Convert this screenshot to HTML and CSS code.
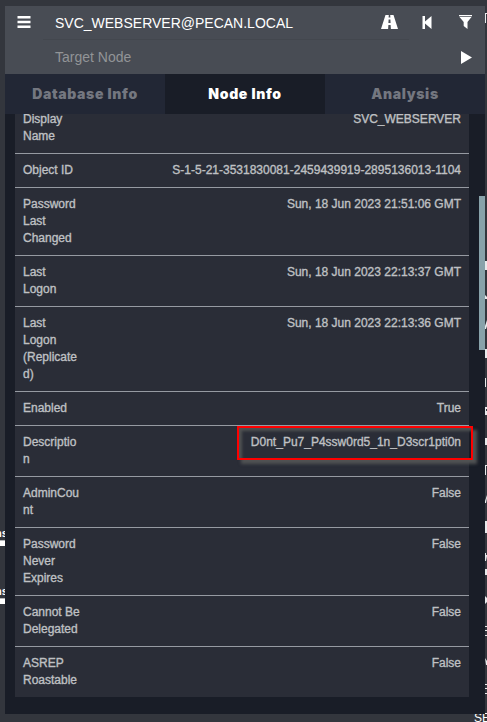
FILE: index.html
```html
<!DOCTYPE html>
<html lang="en">
<head>
<meta charset="utf-8">
<title>Node Info</title>
<link rel="stylesheet" href="styles.css">
</head>
<body>
<div class="graph">
  <span class="node-label l1">ns</span><i class="edge e1"></i>
  <span class="node-label l2">ns</span><i class="edge e2"></i>
  <svg class="labels-right" width="12" height="722" viewBox="0 0 12 722" fill="#e8e9eb">
    <path d="M10 13h2v1h-1v9h-1zM10 261h2v9h-2zM10 295l2 2v2h-2zM10 326l2-6v6l-1 3h-1zM10 349h2v9h-2zM10 378h1v9h-1zM10 407h2v2h-1v2h1v4h-2zM10 438h2v7h-2zM10 465h2v1h-1v9h-1zM10 501l2-6v3l-1 5h-1zM10 521h2v12h-2zM10 553h1v2h1v1l-1 5h-1zM10 569h2v6h-2zM10 596l2 2v4l-2 2zM10 626h2v1h-2zM10 630h2v1h-2zM10 635h2v1h-2zM10 658l2 3v4h-1zM10 684h2v1h-2zM10 688h2v1h-2zM10 693h2v1h-2z"/>
  </svg>
  <span class="node-label l3">SE</span>
</div>
<main class="panel">
  <header class="search">
    <div class="search-row">
      <svg class="menu" width="14" height="12" viewBox="0 0 14 12"><path fill="#fff" d="M.5 0h13v2.500H.5zM.5 4.800h13v2.400H.5zM.5 9.500h13V12H.5z"/></svg>
      <span class="query">SVC_WEBSERVER@PECAN.LOCAL</span>
      <svg class="tools" width="92" height="16" viewBox="0 0 92 16" fill="#fff">
        <path fill-rule="evenodd" d="M4.500 1h3.300L7.600 3.500h1.800L9.200 1h3.300l4.500 14H9.900L9.600 11H7.400l-.3 4H0zM7.600 5.500L7.400 9h2.200l-.2-3.500z"/>
        <path d="M41.500 2h2.500v5.400L50.500 2v13L44 9.600V15h-2.500z"/>
        <path d="M78 1h13v1.300H78zM78.500 3h12L86.500 8v7L82.700 12V8z"/>
      </svg>
    </div>
    <div class="search-row target">
      <span class="query">Target Node</span>
      <svg class="play" width="11" height="13" viewBox="0 0 11 13"><path fill="#fff" d="M0 0l11 6.500L0 13z"/></svg>
    </div>
  </header>
  <nav class="tabs">
    <span class="tab">Database Info</span>
    <span class="tab active">Node Info</span>
    <span class="tab">Analysis</span>
  </nav>
  <section class="content">
    <dl class="props">
      <div class="row"><dt>Display<br>Name</dt><dd>SVC_WEBSERVER</dd></div>
      <div class="row"><dt>Object ID</dt><dd>S-1-5-21-3531830081-2459439919-2895136013-1104</dd></div>
      <div class="row"><dt>Password<br>Last<br>Changed</dt><dd>Sun, 18 Jun 2023 21:51:06 GMT</dd></div>
      <div class="row"><dt>Last<br>Logon</dt><dd>Sun, 18 Jun 2023 22:13:37 GMT</dd></div>
      <div class="row"><dt>Last<br>Logon<br>(Replicate<br>d)</dt><dd>Sun, 18 Jun 2023 22:13:36 GMT</dd></div>
      <div class="row"><dt>Enabled</dt><dd>True</dd></div>
      <div class="row"><dt>Descriptio<br>n</dt><dd>D0nt_Pu7_P4ssw0rd5_1n_D3scr1pti0n</dd></div>
      <div class="row"><dt>AdminCou<br>nt</dt><dd>False</dd></div>
      <div class="row"><dt>Password<br>Never<br>Expires</dt><dd>False</dd></div>
      <div class="row"><dt>Cannot Be<br>Delegated</dt><dd>False</dd></div>
      <div class="row"><dt>ASREP<br>Roastable</dt><dd>False</dd></div>
    </dl>
    <i class="scrollbar"></i>
  </section>
</main>
<div class="highlight"></div>
</body>
</html>
```
FILE: styles.css
```css
* { box-sizing: border-box; }
body {
  margin: 0;
  width: 487px;
  height: 722px;
  padding: 6px 2px 8px 5px;
  overflow: hidden;
  position: relative;
  background: #33363d;
  font-family: "Liberation Sans", Arial, sans-serif;
}
.graph { position: absolute; inset: 0; overflow: hidden; }
.node-label { position: absolute; color: #fff; font-size: 11px; line-height: 12px; font-weight: bold; }
.l1 { left: -5px; top: 527px; }
.l2 { left: -5px; top: 585px; }
.l3 { left: 474px; top: 712px; font-size: 12px; font-weight: normal; }
.edge { position: absolute; left: 0; width: 5px; height: 6px; background: #fff; border-top: 1px solid #b5b6b8; }
.e1 { top: 540px; }
.e2 { top: 598px; }
.labels-right { position: absolute; left: 475px; top: 0; }
.panel {
  position: relative;
  display: flex;
  flex-direction: column;
  width: 480px;
  height: 708px;
  background: #191d27;
}
.search { height: 68px; background: #484c54; }
.search-row { display: flex; align-items: center; height: 34px; padding: 0 13px 0 12px; background: linear-gradient(#43474e, #43474e) 38px 100% / 366px 1px no-repeat; }
.menu { margin-top: -2px; }
.query { flex: 1; font-size: 14px; line-height: 20px; color: #fff; margin-left: 24px; white-space: nowrap; }
.tools { margin-right: -1px; margin-top: -2px; }
.target { padding-left: 26px; background: none; }
.target .query { color: #929497; }
.tabs { display: grid; grid-template-columns: repeat(3, 1fr); height: 40px; }
.tab {
  display: flex;
  align-items: center;
  justify-content: center;
  padding-bottom: 1px;
  background: #222735;
  color: #747780;
  font-family: Inter, "Liberation Sans", sans-serif;
  font-size: 14px;
  font-weight: 900;
  letter-spacing: .65px;
}
.tab.active { background: #191d27; color: #fff; }
.content { position: relative; height: 583px; margin: 0 0 0 10px; overflow: hidden; }
.props { width: 454px; margin: -12px 0 0; background: #2a2d37; }
.row {
  display: flex;
  justify-content: space-between;
  padding: 8px;
  border-top: 1px solid #969aa2;
  font-size: 12px;
  line-height: 17px;
  color: #bfc0c3;
  -webkit-text-stroke: .35px currentColor;
  white-space: nowrap;
}
.row dd { margin: 0; }
.scrollbar { position: absolute; right: 0; top: 82px; width: 6px; height: 154px; background: #88a2aa; }
.highlight {
  position: absolute;
  left: 237px;
  top: 426px;
  width: 236px;
  height: 34px;
  border: 2px solid #f00;
  box-shadow: 4px 4px 3px #505253, inset 3px 3px 3px #505253;
}
```
